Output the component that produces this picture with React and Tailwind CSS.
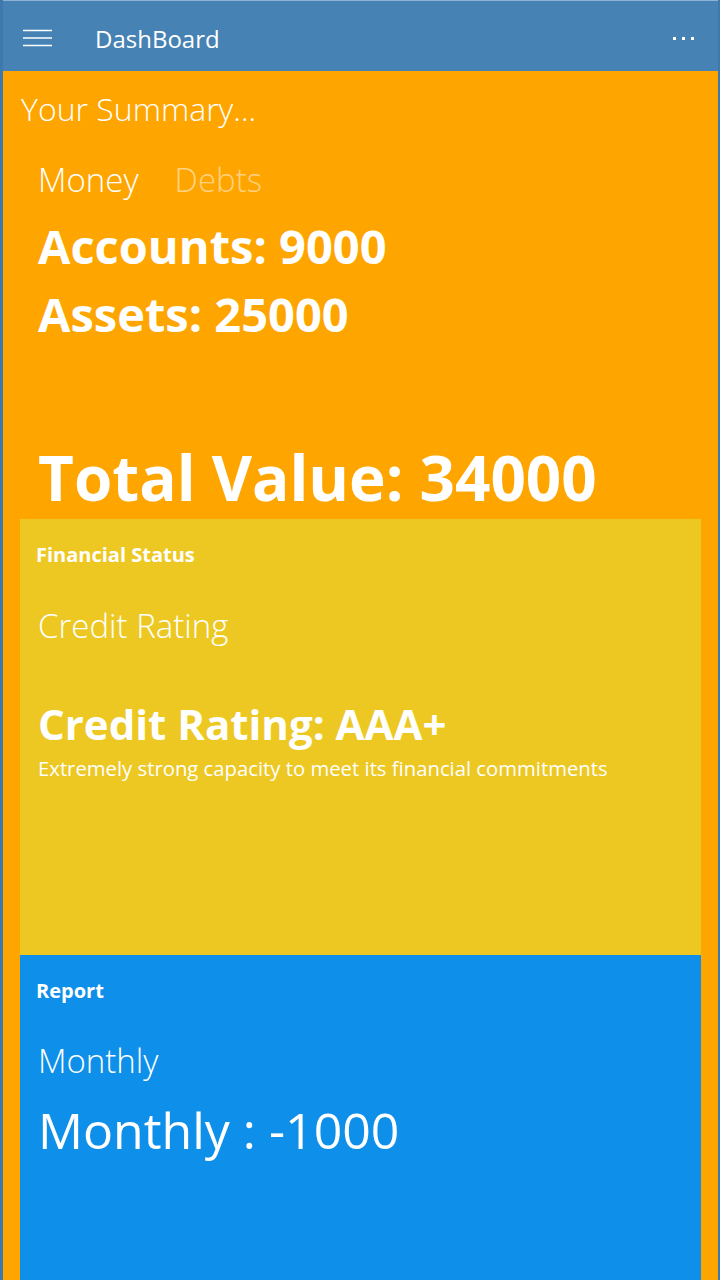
const font = { fontFamily: '"Open Sans", "Noto Sans", sans-serif' };

function Panel({ bg, title, children, className }) {
  return (
    <section className={`${bg} ${className} px-[16px] pt-[23px]`}>
      <h3 className="text-[20px] font-bold leading-[26px] text-white">{title}</h3>
      {children}
    </section>
  );
}

export default function App() {
  return (
    <div
      className="w-[720px] h-[1280px] flex flex-col overflow-hidden border-l-[3px] border-r-[2px] border-[#3d79ad] bg-[#ffa500] text-white"
      style={font}
    >
      {/* title bar */}
      <header className="h-[71px] shrink-0 bg-[#4682b4] border-t border-[#8fb1d3] flex items-center justify-between pl-[20px] pr-[24px] pt-[4px]">
        <div className="flex items-center gap-[43px]">
          <svg width="29" height="18" viewBox="0 0 29 18" className="text-white">
            <path d="M0 1.5h29M0 9h29M0 16.5h29" stroke="currentColor" strokeWidth="1.6" />
          </svg>
          <span className="text-[24px] leading-none mt-[2px]">DashBoard</span>
        </div>
        <div className="flex gap-[6px] mt-[1px]">
          <span className="w-[3px] h-[3px] bg-white" />
          <span className="w-[3px] h-[3px] bg-white" />
          <span className="w-[3px] h-[3px] bg-white" />
        </div>
      </header>

      <main className="flex-1 flex flex-col px-[17px] min-h-0">
        <h1 className="text-[32px] font-light leading-[40px] mt-[18px] ml-[1px]">Your Summary...</h1>

        <div className="flex gap-[36px] ml-[18px] mt-[29px] text-[33px] font-light leading-[44px]">
          <span>Money</span>
          <span className="text-white/50">Debts</span>
        </div>

        <div className="ml-[18px] mt-[10px] font-bold text-[47px] leading-[68px]">
          <p>Accounts: 9000</p>
          <p>Assets: 25000</p>
        </div>

        <p className="ml-[18px] mt-[90px] font-bold text-[62px] leading-[78px]">Total Value: 34000</p>

        <Panel bg="bg-[#edc823]" title="Financial Status" className="h-[436px] shrink-0 mt-[3px]">
          <p className="text-[33px] font-light leading-[44px] mt-[36px] ml-[2px]">Credit Rating</p>
          <p className="text-[42px] font-bold leading-[48px] mt-[52px] ml-[2px]">Credit Rating: AAA+</p>
          <p className="text-[20.3px] leading-[24px] mt-[8px] ml-[2px]">Extremely strong capacity to meet its financial commitments</p>
        </Panel>

        <Panel bg="bg-[#0e8fe9]" title="Report" className="flex-1">
          <p className="text-[33px] font-light leading-[44px] mt-[35px] ml-[2px]">Monthly</p>
          <p className="text-[50px] leading-[64px] mt-[15px] ml-[2px]">Monthly : -1000</p>
        </Panel>
      </main>
    </div>
  );
}
